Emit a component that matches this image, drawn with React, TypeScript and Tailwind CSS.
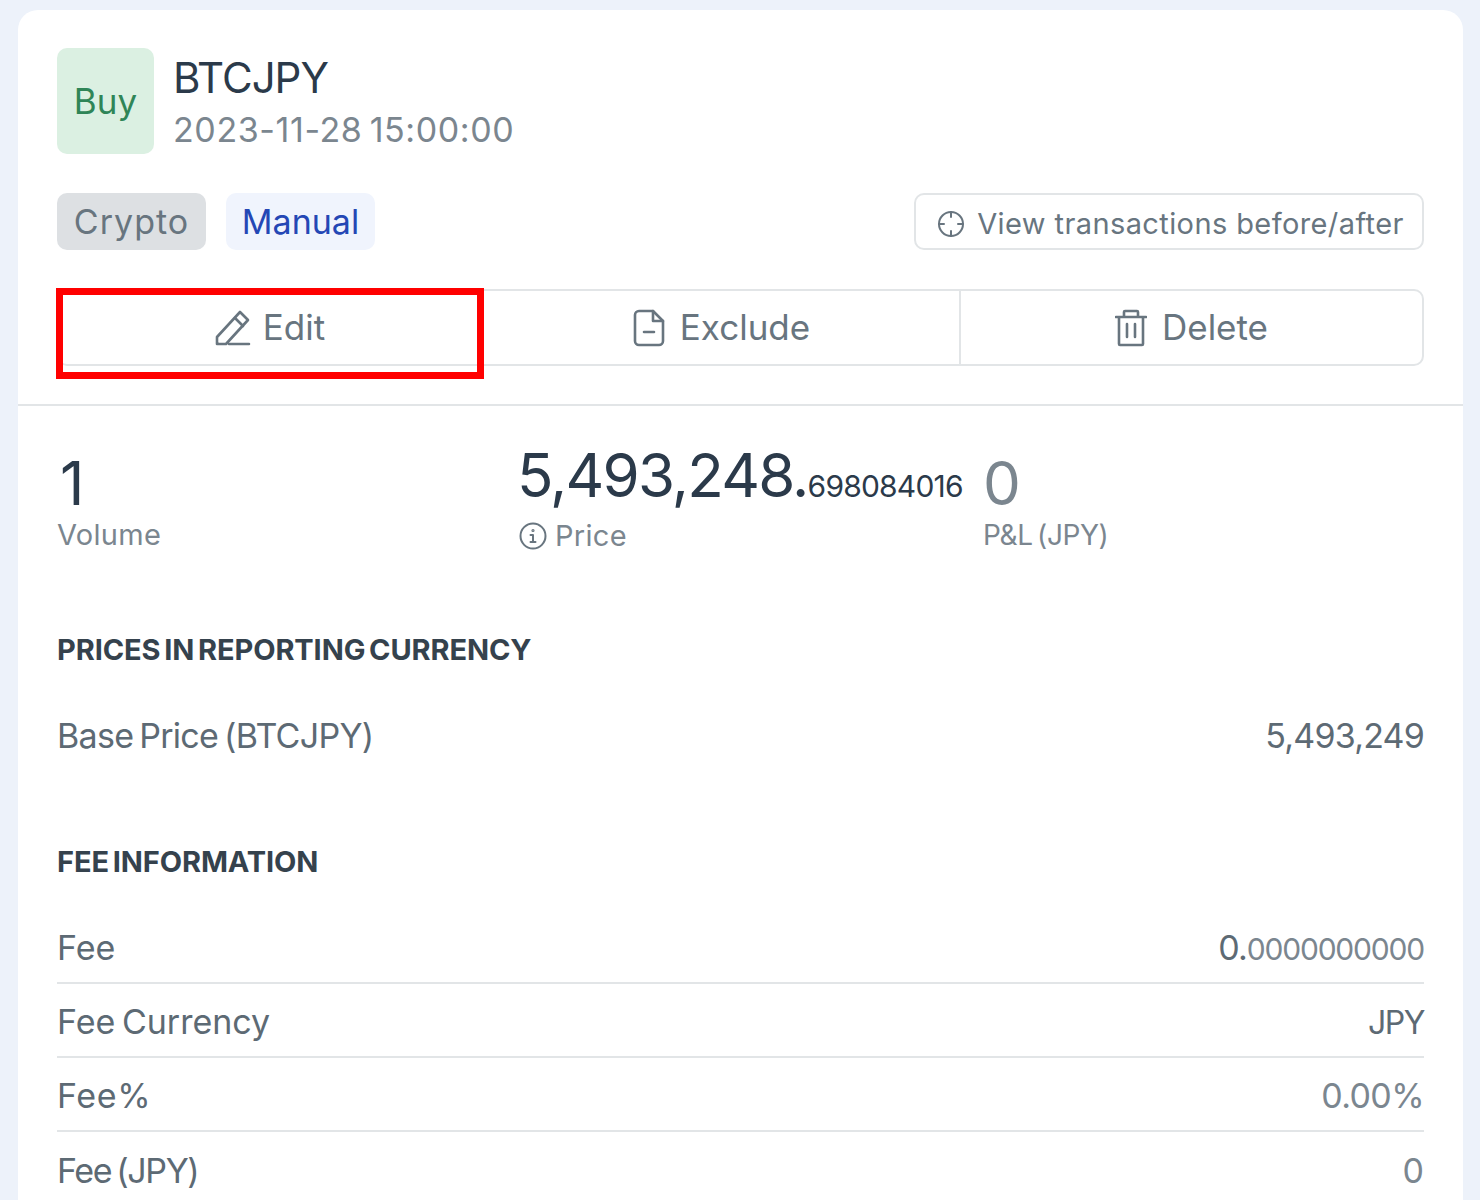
import React from 'react';

const font = { fontFamily: 'Inter, sans-serif', wordSpacing: '-3px' };

const TargetIcon = () => (
  <svg width="28" height="28" viewBox="0 0 28 28" fill="none" stroke="#68757f" strokeWidth="2" strokeLinecap="round">
    <circle cx="14" cy="14" r="12" />
    <path d="M14 2v5M14 21v5M2 14h5M21 14h5" />
  </svg>
);

const PencilIcon = () => (
  <svg width="36" height="36" viewBox="0 0 36 36" fill="none" stroke="#68757f" strokeWidth="2.6" strokeLinecap="round" strokeLinejoin="round">
    <path d="M2 34v-7L25 2l8 8-22 24H4a2 2 0 0 1-2-2z" />
    <path d="M20 8l8 8M14 34h20" />
  </svg>
);

const DocIcon = () => (
  <svg width="32" height="38" viewBox="0 0 32 38" fill="none" stroke="#68757f" strokeWidth="2.6" strokeLinecap="round" strokeLinejoin="round">
    <path d="M20 2H6a4 4 0 0 0-4 4v26a4 4 0 0 0 4 4h20a4 4 0 0 0 4-4V12z" />
    <path d="M20 2v10h10M11 23h10" />
  </svg>
);

const TrashIcon = () => (
  <svg width="32" height="38" viewBox="0 0 32 38" fill="none" stroke="#68757f" strokeWidth="2.6" strokeLinecap="round" strokeLinejoin="round">
    <path d="M1 8h30M4 8v27a1 1 0 0 0 1 1h22a1 1 0 0 0 1-1V8M9 8V3a1 1 0 0 1 1-1h12a1 1 0 0 1 1 1v5M12 15v13M20 15v13" />
  </svg>
);

const InfoIcon = () => (
  <svg width="28" height="28" viewBox="0 0 28 28" fill="none" stroke="#68757f" strokeWidth="2" strokeLinecap="round">
    <circle cx="14" cy="14" r="12.5" />
    <path d="M14 13v7M11.5 13H14M11.5 20h5" />
    <circle cx="14" cy="8.5" r="0.6" />
  </svg>
);

const Row = ({ label, labelClass, children, last }: { label: string; labelClass?: string; children: React.ReactNode; last?: boolean }) => (
  <div className={`flex h-[74px] items-center justify-between pt-[2px] text-[34px] text-[#5d6a74] ${last ? '' : 'border-b-2 border-[#e2e5e7]'}`}>
    <span className={labelClass}>{label}</span>
    <span>{children}</span>
  </div>
);

const App: React.FC = () => {
  return (
    <div className="relative h-[1200px] overflow-hidden bg-[#edf2fa] pl-[18px] pr-[17px] pt-[10px]" style={font}>
      <div className="h-[1300px] rounded-t-[20px] bg-white">
        <div className="border-b-2 border-[#e2e5e7] px-[39px] pb-[38px] pt-[38px]">
          <div className="flex items-center gap-[19px]">
            <div className="flex h-[106px] w-[97px] items-center justify-center rounded-[10px] bg-[#dbf0e2] text-[35px] text-[#2f8557]">Buy</div>
            <div className="pt-[3px]">
              <div className="text-[42px] leading-[52px] tracking-[-1px] text-[#2b3a4a]">BTCJPY</div>
              <div className="mt-[2px] text-[34px] leading-[48px] tracking-[0.6px] text-[#7b868f]">2023-11-28 15:00:00</div>
            </div>
          </div>
          <div className="mt-[39px] flex items-center justify-between">
            <div className="flex gap-5">
              <span className="flex h-[57px] w-[149px] items-center justify-center rounded-[10px] bg-[#dde0e3] text-[34px] tracking-[1px] text-[#68757f]">Crypto</span>
              <span className="flex h-[57px] w-[149px] items-center justify-center rounded-[10px] bg-[#f0f4fd] text-[34px] text-[#2447b5]">Manual</span>
            </div>
            <button className="flex h-[57px] w-[510px] items-center justify-center gap-3 rounded-[10px] border-2 border-[#e2e5e7] pl-[3px] pt-[4px] text-[29px] tracking-[0.4px] text-[#68757f]">
              <TargetIcon />
              View transactions before/after
            </button>
          </div>
          <div className="mt-[39px] flex h-[77px] rounded-[10px] border-2 border-[#e2e5e7] text-[35px] text-[#68757f]">
            <button className="flex w-[425px] items-center justify-center gap-3 pr-[3px]">
              <PencilIcon />
              Edit
            </button>
            <button className="flex w-[475px] items-center justify-center gap-[15px]">
              <DocIcon />
              Exclude
            </button>
            <button className="flex flex-1 items-center justify-center gap-[15px] border-l-2 border-[#e2e5e7]">
              <TrashIcon />
              Delete
            </button>
          </div>
        </div>

        <div className="px-[39px]">
          <div className="mt-[29px] flex">
            <div className="w-[462px] pt-[16px]">
              <div className="pl-[3px] text-[60px] leading-[64px] text-[#2b3a4a]">1</div>
              <div className="text-[29px] leading-[40px] tracking-[0.3px] text-[#7b868f]">Volume</div>
            </div>
            <div className="w-[464px] pt-[10px]">
              <div className="-ml-[2px] text-[60px] leading-[60px] tracking-[-1.8px] text-[#2b3a4a]">
                5,493,248.<span className="text-[30px] tracking-[-0.8px]">698084016</span>
              </div>
              <div className="flex items-center gap-2 text-[29px] leading-[40px] tracking-[0.3px] text-[#7b868f]">
                <InfoIcon />
                Price
              </div>
            </div>
            <div className="pt-[16px]">
              <div className="text-[60px] leading-[64px] text-[#7b868f]">0</div>
              <div className="text-[28px] leading-[40px] tracking-[-0.4px] text-[#7b868f]">P&amp;L (JPY)</div>
            </div>
          </div>

          <div className="mt-[74px] text-[29px] font-bold leading-[40px] tracking-[-0.1px] text-[#35424d]">PRICES IN REPORTING CURRENCY</div>
          <div className="mt-[28px] flex h-[74px] items-center justify-between text-[34px] text-[#5d6a74]">
            <span className="tracking-[-0.7px]">Base Price (BTCJPY)</span>
            <span className="tracking-[-0.8px]">5,493,249</span>
          </div>

          <div className="mt-[70px] text-[29px] font-bold leading-[40px] tracking-[-0.1px] text-[#35424d]">FEE INFORMATION</div>
          <div className="mt-[28px]">
            <Row label="Fee">
              <span className="tracking-[-1px]">0.</span>
              <span className="text-[30px] tracking-[-1.2px] text-[#7b868f]">0000000000</span>
            </Row>
            <Row label="Fee Currency">
              <span className="text-[32px] tracking-[-1.5px]">JPY</span>
            </Row>
            <Row label="Fee%" labelClass="tracking-[0.6px]"><span className="tracking-[-0.6px] text-[#7b868f]">0.00%</span></Row>
            <Row label="Fee (JPY)" labelClass="tracking-[-1.4px]" last><span className="text-[#7b868f]">0</span></Row>
          </div>
        </div>
      </div>

      {/* annotation from the screenshot */}
      <div className="absolute left-[56px] top-[288px] h-[91px] w-[428px] border-[7px] border-[#ff0000]" />
    </div>
  );
};

export default App;
